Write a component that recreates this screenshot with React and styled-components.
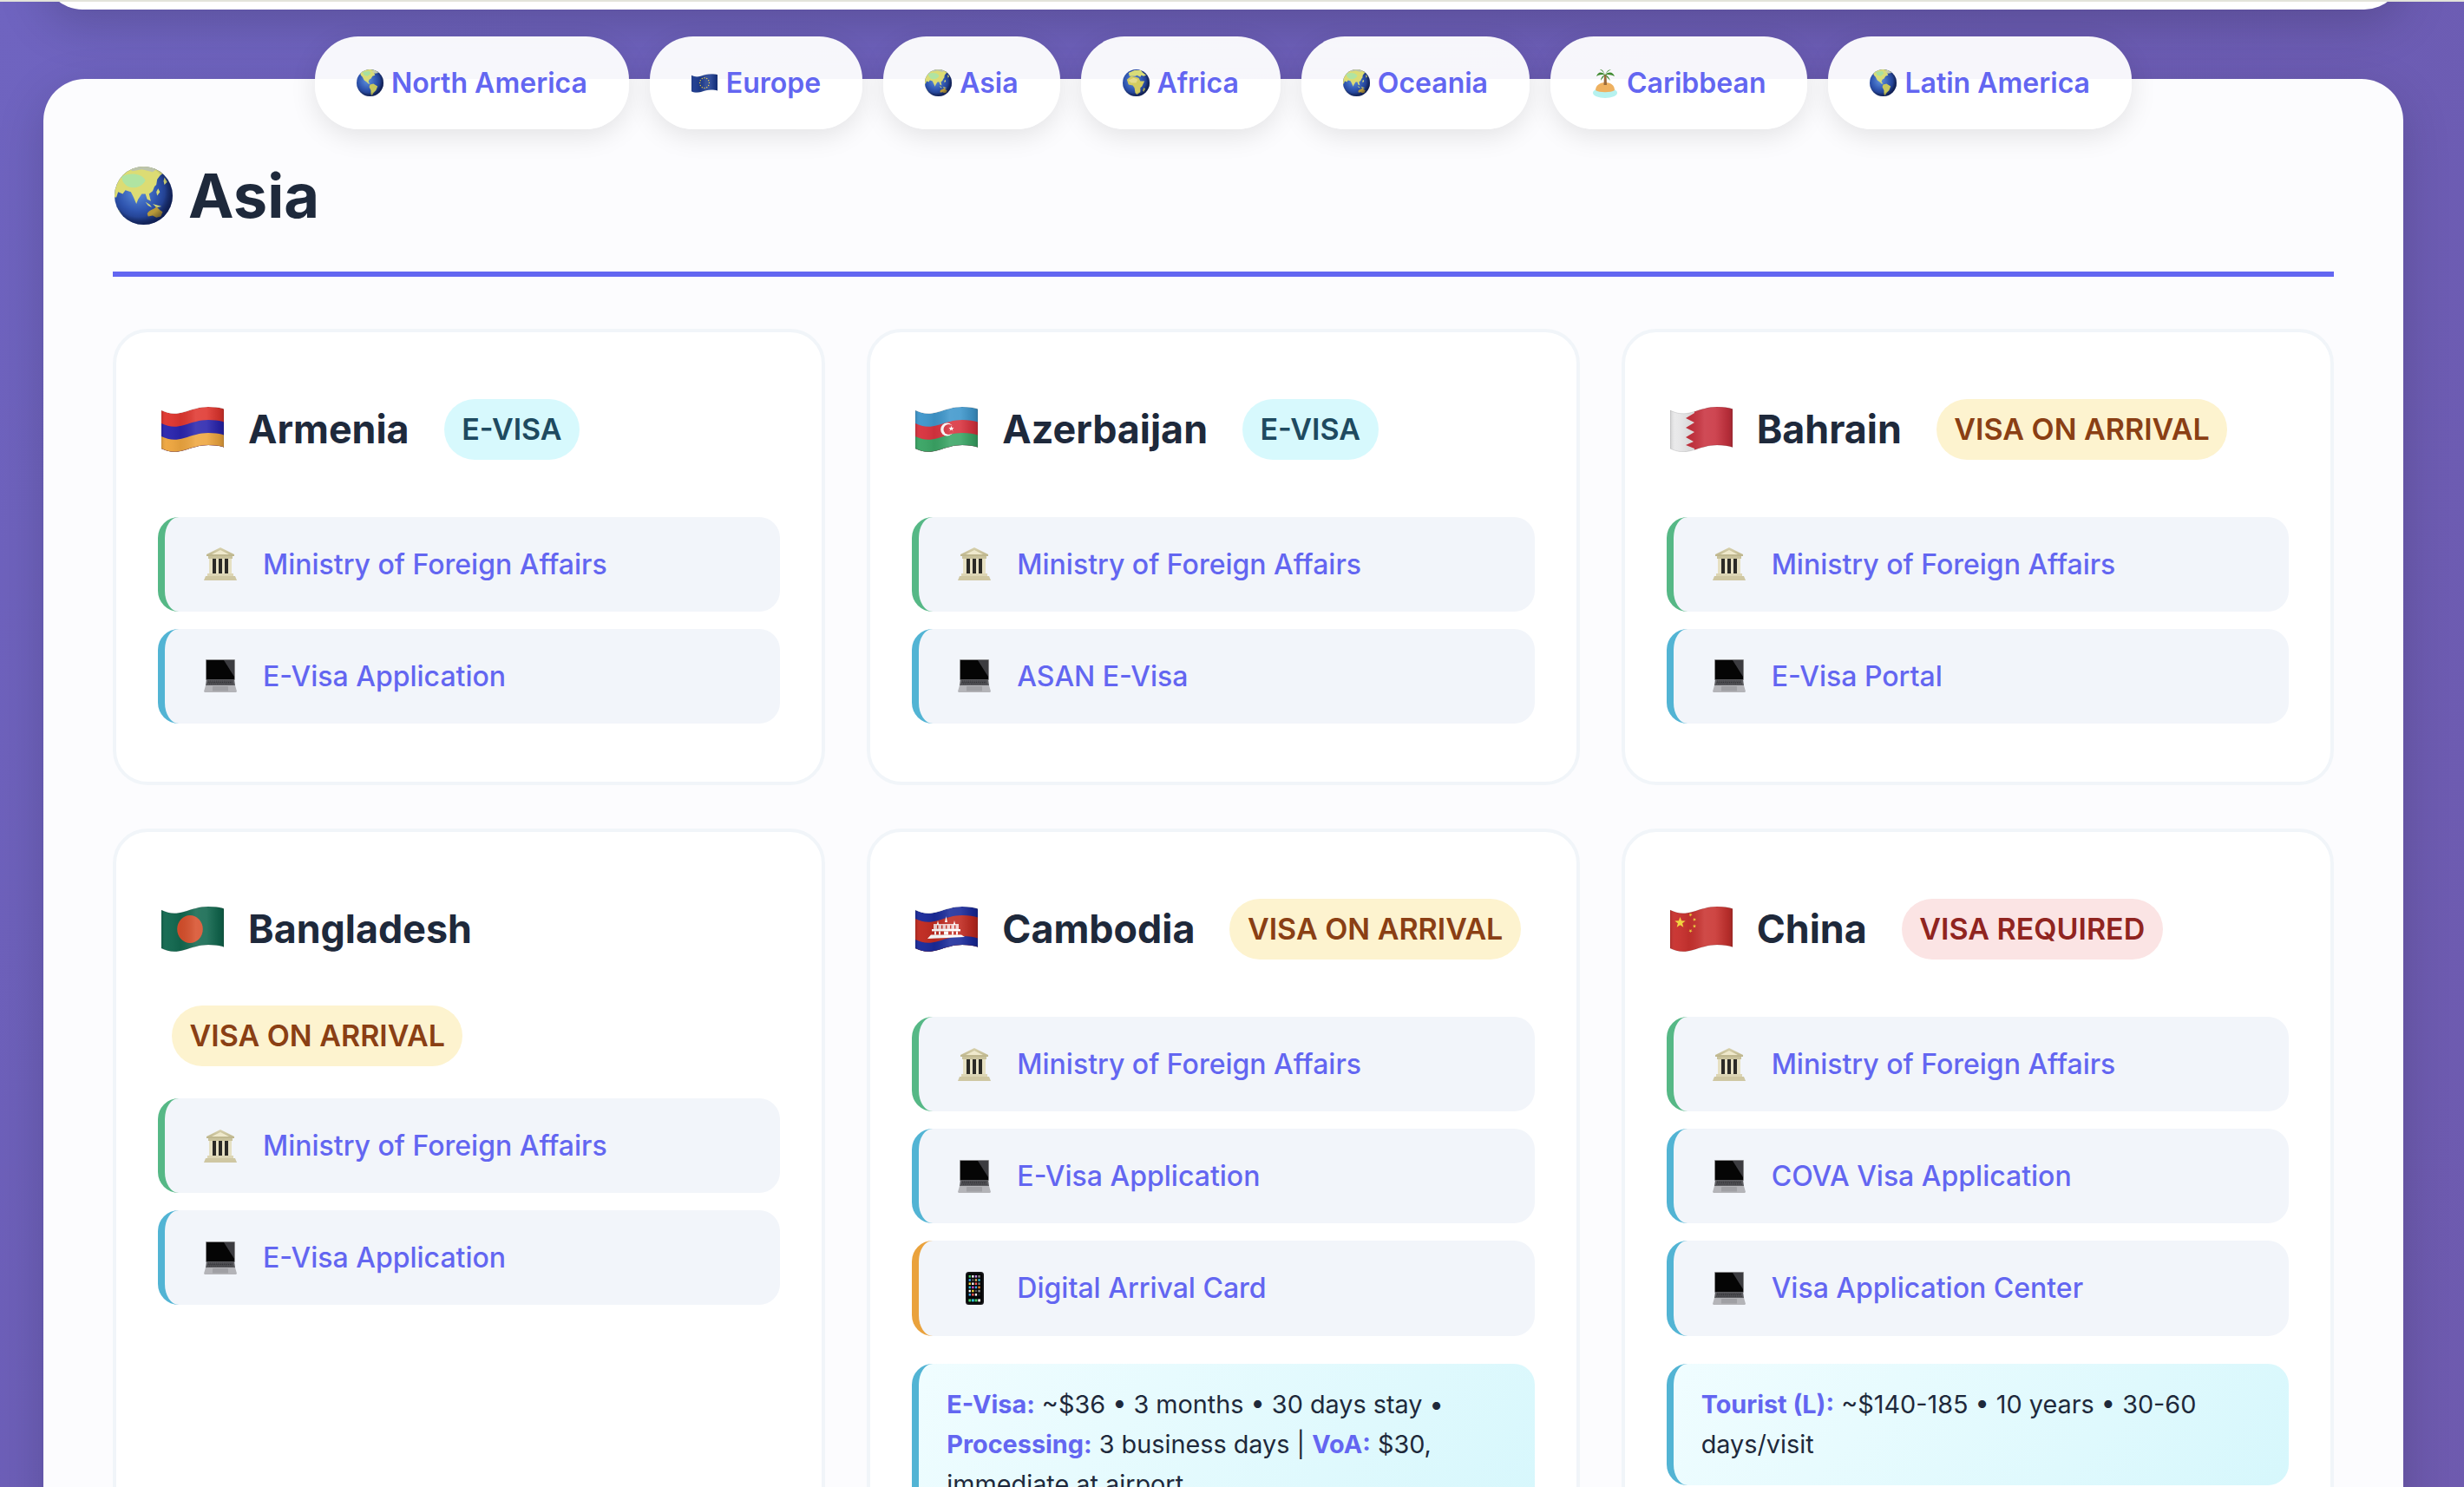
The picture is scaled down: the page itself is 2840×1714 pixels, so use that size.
import React, { useId } from "react";
import styled, { createGlobalStyle } from "styled-components";

const Global = createGlobalStyle`
  html, body { margin: 0; padding: 0; height: 1714px; overflow: hidden; }
  body { font-family: Inter, "Noto Sans", sans-serif; line-height: 1.6; color: #1e293b; }
  #root { height: 1714px; overflow: hidden; }
  * { box-sizing: border-box; }
`;

const Page = styled.div`
  min-height: 1714px;
  padding: 0 70px 0 50px;
  background: linear-gradient(135deg, #6f64c0 0%, #6c5db5 50%, #6e5aae 100%);
`;
const TopStrip = styled.div`
  position: relative;
  z-index: 3;
  height: 2px;
  margin: 0 -70px 0 -50px;
  background: #e3e4da;
`;
const TopCard = styled.div`
  height: 90px;
  margin-top: -81px;
  background: #fff;
  border-radius: 48px;
  box-shadow: 0 16px 56px rgba(0, 0, 0, 0.18);
`;
const RegionNav = styled.nav`
  position: relative;
  z-index: 2;
  display: flex;
  justify-content: center;
  gap: 24px;
  margin-top: 31px;
  margin-bottom: -58px;
`;
const RegionPill = styled.a`
  display: flex;
  align-items: center;
  height: 107px;
  padding: 0 48px;
  border-radius: 50px;
  background: rgba(255, 255, 255, 0.95);
  box-shadow: 0 8px 30px rgba(0, 0, 0, 0.1);
  color: #6366f1;
  font-size: 32px;
  font-weight: 600;
  white-space: nowrap;
`;
const PillEmoji = styled.span`
  display: flex;
  align-items: center;
  width: 40px;
  height: 34px;
`;
const MainCard = styled.main`
  min-height: 1800px;
  padding: 77px 80px 80px;
  background: #fcfcfe;
  border-radius: 48px;
  box-shadow: 0 16px 56px rgba(0, 0, 0, 0.16);
`;
const Heading = styled.h2`
  display: flex;
  align-items: center;
  margin: 0 0 60px;
  padding-bottom: 30px;
  border-bottom: 6px solid #6366f1;
  color: #1e293b;
  font-size: 70.4px;
  font-weight: 700;
  line-height: 115px;
`;
const HeadingEmoji = styled.span`
  display: flex;
  align-items: center;
  width: 87px;
  padding-left: 2px;
`;
const CardGrid = styled.section`
  display: grid;
  grid-template-columns: repeat(3, 1fr);
  gap: 50px 48px;
`;
const CountryCard = styled.article`
  padding: 48px;
  background: #fff;
  border: 4px solid #f1f5f9;
  border-radius: 40px;
`;
const CardHead = styled.header`
  display: flex;
  flex-wrap: wrap;
  align-items: center;
  gap: 24px;
  margin-bottom: 36.6px;
`;
const FlagBox = styled.span`
  display: flex;
  align-items: center;
  justify-content: center;
  width: 80px;
  height: 128px;
`;
const CountryName = styled.h3`
  margin: 0;
  color: #1e293b;
  font-size: 44.8px;
  font-weight: 700;
  line-height: 72px;
`;
const BADGES = {
  evisa: ["#d7f9fd", "#1e4a60"],
  arrival: ["#fdf3cf", "#8a3f14"],
  required: ["#fbe4e4", "#902420"],
};
const StatusBadge = styled.span`
  display: inline-flex;
  align-items: center;
  height: 70px;
  margin-left: 16px;
  padding: 0 20.5px;
  border-radius: 35px;
  font-size: 34px;
  font-weight: 600;
  white-space: nowrap;
  background: ${(p) => BADGES[p.$kind][0]};
  color: ${(p) => BADGES[p.$kind][1]};
`;
const LinkList = styled.div`
  display: flex;
  flex-direction: column;
  gap: 20px;
  margin-bottom: 19.4px;
`;
const TONES = { green: "#56b886", blue: "#52b4d4", orange: "#eaa23c" };
const LinkRow = styled.a`
  display: flex;
  align-items: center;
  height: 109.2px;
  padding-left: 36px;
  border-left: 8px solid ${(p) => TONES[p.$tone]};
  border-radius: 24px;
  background: #f2f5fa;
`;
const LinkIcon = styled.span`
  display: flex;
  align-items: center;
  justify-content: center;
  width: 56px;
  margin-right: 21px;
`;
const LinkLabel = styled.span`
  color: #6366f1;
  font-size: 32px;
  font-weight: 500;
`;
const Note = styled.div`
  margin-top: 32px;
  padding: 24px 32px;
  border-left: 8px solid #52b4d4;
  border-radius: 24px;
  background: linear-gradient(135deg, #f0fdff 0%, #d6f7fc 100%);
  color: #1e293b;
  font-size: 28.8px;
  line-height: 46.08px;
`;
const NoteLabel = styled.strong`
  color: #6366f1;
  font-weight: 700;
`;

/* ---------- emoji drawings ---------- */
const wave = (t) =>
  `C8 ${8 + t} 16 ${9 + t} 26 ${6 + t}C36 ${3 + t} 44 ${t} 54 ${t}C62 ${t} 68 ${1 + t} 72 ${2.5 + t}`;
const waveBack = (t) =>
  `C68 ${1 + t} 62 ${t} 54 ${t}C44 ${t} 36 ${3 + t} 26 ${6 + t}C16 ${9 + t} 8 ${8 + t} 0 ${4 + t}`;
const Band = ({ t, fill }) => <path d={`M0 ${4 + t}${wave(t)}L72 70L0 70Z`} fill={fill} />;
const FLAG_SHAPE = `M0 4${wave(0)}L72 46.5${waveBack(44)}Z`;

const WavyFlag = ({ children, w = 72, h = 52 }) => {
  const id = useId().replace(/[^a-z0-9]/gi, "");
  return (
    <svg width={w} height={h} viewBox="0 0 72 52" aria-hidden="true">
      <defs>
        <clipPath id={`c${id}`}>
          <path d={FLAG_SHAPE} />
        </clipPath>
        <linearGradient id={`s${id}`} x1="0" x2="1" y1="0" y2="0">
          <stop offset="0" stopColor="#000" stopOpacity=".12" />
          <stop offset=".08" stopColor="#fff" stopOpacity=".03" />
          <stop offset=".3" stopColor="#000" stopOpacity=".06" />
          <stop offset=".55" stopColor="#fff" stopOpacity=".12" />
          <stop offset=".72" stopColor="#fff" stopOpacity=".1" />
          <stop offset=".92" stopColor="#000" stopOpacity=".1" />
          <stop offset="1" stopColor="#000" stopOpacity=".2" />
        </linearGradient>
      </defs>
      <g clipPath={`url(#c${id})`}>
        {children}
        <rect x="0" y="-2" width="72" height="56" fill={`url(#s${id})`} />
      </g>
      <path d={FLAG_SHAPE} fill="none" stroke="#000" strokeOpacity=".14" strokeWidth=".8" />
    </svg>
  );
};

const star = (cx, cy, r, rot = 0) => {
  const pts = [];
  for (let i = 0; i < 10; i++) {
    const a = (Math.PI / 5) * i - Math.PI / 2 + rot;
    const q = i % 2 ? r * 0.42 : r;
    pts.push(`${(cx + q * Math.cos(a)).toFixed(2)},${(cy + q * Math.sin(a)).toFixed(2)}`);
  }
  return pts.join(" ");
};

const FlagArmenia = () => (
  <WavyFlag>
    <Band t={0} fill="#e0362f" />
    <Band t={15} fill="#2a25ae" />
    <Band t={30} fill="#eea63f" />
  </WavyFlag>
);
const FlagAzerbaijan = () => (
  <WavyFlag>
    <Band t={0} fill="#3f97cc" />
    <Band t={15} fill="#d9333f" />
    <Band t={30} fill="#3aa565" />
    <circle cx="36.5" cy="26" r="7.4" fill="#fff" />
    <circle cx="38.5" cy="26" r="6" fill="#d9333f" />
    <polygon points={star(41.5, 25, 3.2)} fill="#fff" />
  </WavyFlag>
);
const FlagBahrain = () => (
  <WavyFlag>
    <rect x="0" y="-2" width="72" height="56" fill="#e9e9ea" />
    <polygon
      points="27,-4 28,7 18,13 28,18 18,24 28,29 18,35 27,40 18,44 28,48 28,56 74,56 74,-4"
      fill="#c9323f"
    />
  </WavyFlag>
);
const FlagBangladesh = () => (
  <WavyFlag>
    <rect x="0" y="-2" width="72" height="56" fill="#12684f" />
    <ellipse cx="33" cy="26" rx="14.8" ry="16" fill="#d8502c" />
  </WavyFlag>
);
const FlagCambodia = () => (
  <WavyFlag>
    <Band t={0} fill="#1a2a9a" />
    <Band t={10} fill="#c02a20" />
    <Band t={34} fill="#1a2a9a" />
    <g fill="#fff">
      <polygon points="35.5,11 37,18 34,18" />
      <polygon points="26,16 27.3,21 24.7,21" />
      <polygon points="45,16 46.3,21 43.7,21" />
      <rect x="21" y="20" width="29" height="6" opacity=".8" />
      <rect x="19" y="26" width="33" height="2.4" />
      <rect x="22" y="28.5" width="2" height="4" />
      <rect x="27" y="28.5" width="2" height="4" />
      <rect x="33" y="28.5" width="5" height="4" />
      <rect x="42" y="28.5" width="2" height="4" />
      <rect x="47" y="28.5" width="2" height="4" />
      <polygon points="18,32.5 53,32.5 57,35 14,37" />
    </g>
    <g fill="#c02a20">
      <rect x="25" y="21.5" width="1.4" height="4" />
      <rect x="30" y="21.5" width="1.4" height="4" />
      <rect x="35" y="21.5" width="1.4" height="4" />
      <rect x="40" y="21.5" width="1.4" height="4" />
      <rect x="45" y="21.5" width="1.4" height="4" />
    </g>
  </WavyFlag>
);
const FlagChina = () => (
  <WavyFlag>
    <rect x="0" y="-2" width="72" height="56" fill="#c9322f" />
    <g fill="#f5d63d">
      <polygon points={star(11.5, 18.5, 6.5)} />
      <polygon points={star(23.5, 9.5, 2.2, 0.4)} />
      <polygon points={star(28, 15, 2.2, 0.9)} />
      <polygon points={star(28, 22.5, 2.2, 0)} />
      <polygon points={star(23.5, 28, 2.2, 0.5)} />
    </g>
  </WavyFlag>
);

const Globe = ({ size, children }) => {
  const id = useId().replace(/[^a-z0-9]/gi, "");
  return (
    <svg width={size} height={size} viewBox="0 0 64 64" aria-hidden="true">
      <defs>
        <radialGradient id={`o${id}`} cx=".4" cy=".42" r=".62">
          <stop offset="0" stopColor="#5f92dd" />
          <stop offset=".55" stopColor="#2f55b0" />
          <stop offset="1" stopColor="#152a6e" />
        </radialGradient>
        <radialGradient id={`v${id}`} cx=".42" cy=".42" r=".62">
          <stop offset=".72" stopColor="#000" stopOpacity="0" />
          <stop offset="1" stopColor="#0a1238" stopOpacity=".55" />
        </radialGradient>
        <clipPath id={`g${id}`}>
          <circle cx="32" cy="32" r="32" />
        </clipPath>
      </defs>
      <circle cx="32" cy="32" r="32" fill={`url(#o${id})`} />
      <g clipPath={`url(#g${id})`}>{children}</g>
      <circle cx="32" cy="32" r="32" fill={`url(#v${id})`} />
    </svg>
  );
};
const GlobeAsia = ({ size }) => (
  <Globe size={size}>
    <path
      d="M0 34L0 20C2 8 16 -2 32 -2C42 -2 50 2 54 7L50 10L47 14L46 20L44 22L42 27L38 30L40 38L36 36L34 30L30 30L26 36L24 41L21 34L18 28L12 26L9 30L4 28L2 34Z"
      fill="#dcdc74"
    />
    <path d="M8 11C18 6 30 8 34 15C31 22 22 25 15 22C11 20 8 16 8 11Z" fill="#b0e4a2" />
    <path d="M14 2C22 -1 36 -2 46 3L42 6L30 3L20 5Z" fill="#bcc4ac" />
    <path d="M34 39L39 42L41 45L37 43ZM42 41L52 44L46 45ZM48 24L50 28L47 32L46 28ZM55 12L58 17L55 20L54 16Z" fill="#d4d878" />
    <path d="M2 50L5 48L8 54L5 56Z" fill="#d4d878" />
    <path d="M36 52C38 47 44 48 46 44L50 48L53 50L51 55L46 56L42 54L37 55Z" fill="#b8993a" />
  </Globe>
);
const GlobeAmericas = ({ size }) => (
  <Globe size={size}>
    <path
      d="M8 6C16 0 30 -2 44 2L46 6L42 10L44 14L38 16L34 22L30 24L28 30L32 34L28 34L24 30L18 26L14 18L10 14Z"
      fill="#d8dc78"
    />
    <path d="M14 6L30 4L34 10L26 16L18 14Z" fill="#a8e0a0" />
    <path d="M32 36L40 34L50 40L46 50L40 56L37 62L34 60L34 50L30 42Z" fill="#c8c85c" />
    <path d="M36 4L48 2L52 8L44 10Z" fill="#c4cbb0" />
  </Globe>
);
const GlobeAfrica = ({ size }) => (
  <Globe size={size}>
    <path
      d="M14 8L28 2L44 2L46 6L56 14L50 16L44 14L42 18L34 14L30 16L22 16L16 16Z"
      fill="#d8dc78"
    />
    <path d="M10 24L20 16L30 18L38 20L42 28L52 28L46 40L42 44L42 54L34 60L30 56L28 44L24 38L14 36Z" fill="#d4cc60" />
    <path d="M14 26L26 20L36 24L32 32L20 32Z" fill="#e6dc8c" />
    <path d="M50 44L54 46L50 54L48 50Z" fill="#c8c85c" />
  </Globe>
);
const EuFlag = () => {
  const dots = [];
  for (let i = 0; i < 12; i++) {
    const a = (Math.PI / 6) * i;
    dots.push(<circle key={i} cx={36 + 13 * Math.cos(a)} cy={25 + 14 * Math.sin(a)} r="1.8" fill="#e9c93c" />);
  }
  return (
    <WavyFlag w={30} h={22}>
      <rect x="0" y="-2" width="72" height="56" fill="#1c3b8f" />
      {dots}
    </WavyFlag>
  );
};
const Island = () => (
  <svg width="30" height="34" viewBox="0 0 30 34" aria-hidden="true">
    <ellipse cx="15" cy="28" rx="14" ry="6" fill="#b6f2ef" />
    <path d="M4 25C4 19 10 16 15 16C21 16 26 19 26 25C22 28 8 28 4 25Z" fill="#eeb160" />
    <path d="M14 7L16.5 7L17 19L13.5 19Z" fill="#9a6a3a" />
    <g fill="#3f8a30">
      <path d="M15 7C10 3 7 4 5 9C8 7 11 7 15 7Z" />
      <path d="M15 7C20 3 24 4 26 9C22 7 19 7 15 7Z" />
      <path d="M15 7C13 3 12 1 9 1C11 2 13 4 15 7Z" />
      <path d="M15 7C17 3 19 1 22 1C20 2 17 4 15 7Z" />
      <path d="M15 7C12 8 10 11 10 14C12 11 13 10 15 7Z" />
      <path d="M15 7C18 8 20 11 21 14C18 11 17 10 15 7Z" />
    </g>
  </svg>
);
const Building = () => (
  <svg width="38" height="38" viewBox="0 0 38 38" aria-hidden="true">
    <defs>
      <linearGradient id="stone" x1="0" x2="0" y1="0" y2="1">
        <stop offset="0" stopColor="#d9d2ae" />
        <stop offset="1" stopColor="#bdb58c" />
      </linearGradient>
    </defs>
    <polygon points="19,0 35,8 35,10 3,10 3,8" fill="url(#stone)" />
    <polygon points="19,3 29,8 9,8" fill="#efe9cc" />
    <rect x="5" y="10" width="28" height="3" fill="#c9c29c" />
    <rect x="6" y="13" width="26" height="17" fill="#e6e0c2" />
    <rect x="10" y="13" width="4" height="17" fill="#2b2a26" />
    <rect x="17" y="13" width="4" height="17" fill="#2b2a26" />
    <rect x="24" y="13" width="4" height="17" fill="#2b2a26" />
    <rect x="4" y="30" width="30" height="3" fill="#dcd5b4" />
    <polygon points="2,33 36,33 38,38 0,38" fill="#cfc7a2" />
  </svg>
);
const Laptop = () => (
  <svg width="38" height="38" viewBox="0 0 38 38" aria-hidden="true">
    <rect x="2" y="0" width="34" height="24" rx="1" fill="#8a8a8c" />
    <rect x="3" y="1" width="32" height="22" fill="#050505" />
    <polygon points="23,1 35,1 35,20" fill="#3c3c40" />
    <polygon points="3,23 35,23 36,30 2,30" fill="#5c5c60" />
    <g stroke="#26262a" strokeWidth=".9">
      <path d="M5 25H33M4.6 26.6H33.4M4.2 28.2H33.8" strokeDasharray="1.2 .6" />
    </g>
    <polygon points="2,30 36,30 38,37 37,38 1,38 0,37" fill="#b4b4b8" />
    <rect x="10" y="31" width="18" height="5.4" rx=".5" fill="#a0a0a4" />
  </svg>
);
const Phone = () => {
  const cols = ["#49d16a", "#fff", "#c68be8", "#8d8d8d", "#3fa9f5", "#555", "#e0b060", "#36c3e0", "#f5d63d", "#fff", "#ff5a5a", "#888", "#36c3e0", "#d04fd0", "#3fa9f5", "#f08a30", "#fff", "#f5d63d", "#555", "#999", "#3fa9f5", "#ff5a5a", "#fff", "#222"];
  const cells = cols.map((c, i) => (
    <rect key={i} x={3.6 + (i % 4) * 3.6} y={4 + Math.floor(i / 4) * 4.2} width="2.3" height="2.6" fill={c} />
  ));
  return (
    <svg width="21" height="38" viewBox="0 0 21 38" aria-hidden="true">
      <rect x="0" y="0" width="21" height="38" rx="3.5" fill="#1a1a1c" />
      <rect x="1.5" y="1.5" width="18" height="35" rx="2.5" fill="#050506" />
      {cells}
      {["#49d16a", "#36c3e0", "#49d16a", "#eee"].map((c, i) => (
        <rect key={i} x={3.4 + i * 3.6} y="31.4" width="2.8" height="3" fill={c} />
      ))}
    </svg>
  );
};

/* ---------- data ---------- */
const REGIONS = [
  ["North America", <GlobeAmericas size={31} />],
  ["Europe", <EuFlag />],
  ["Asia", <GlobeAsia size={31} />],
  ["Africa", <GlobeAfrica size={31} />],
  ["Oceania", <GlobeAsia size={31} />],
  ["Caribbean", <Island />],
  ["Latin America", <GlobeAmericas size={31} />],
];
const MFA = ["green", "building", "Ministry of Foreign Affairs"];
const web = (t) => ["blue", "laptop", t];
const ICONS = { building: <Building />, laptop: <Laptop />, phone: <Phone /> };
const COUNTRIES = [
  { name: "Armenia", flag: <FlagArmenia />, kind: "evisa", status: "E-VISA", links: [MFA, web("E-Visa Application")] },
  { name: "Azerbaijan", flag: <FlagAzerbaijan />, kind: "evisa", status: "E-VISA", links: [MFA, web("ASAN E-Visa")] },
  { name: "Bahrain", flag: <FlagBahrain />, kind: "arrival", status: "VISA ON ARRIVAL", links: [MFA, web("E-Visa Portal")] },
  { name: "Bangladesh", flag: <FlagBangladesh />, kind: "arrival", status: "VISA ON ARRIVAL", links: [MFA, web("E-Visa Application")] },
  {
    name: "Cambodia",
    flag: <FlagCambodia />,
    kind: "arrival",
    status: "VISA ON ARRIVAL",
    links: [MFA, web("E-Visa Application"), ["orange", "phone", "Digital Arrival Card"]],
    note: (
      <>
        <NoteLabel>E-Visa:</NoteLabel> ~$36 • 3 months • 30 days stay • <NoteLabel>Processing:</NoteLabel> 3 business days | <NoteLabel>VoA:</NoteLabel> $30, immediate at airport
      </>
    ),
  },
  {
    name: "China",
    flag: <FlagChina />,
    kind: "required",
    status: "VISA REQUIRED",
    links: [MFA, web("COVA Visa Application"), web("Visa Application Center")],
    note: (
      <>
        <NoteLabel>Tourist (L):</NoteLabel> ~$140-185 • 10 years • 30-60 days/visit
      </>
    ),
  },
];

export default function App() {
  return (
    <>
      <Global />
      <Page>
        <TopStrip />
        <TopCard />
        <RegionNav>
          {REGIONS.map(([label, icon]) => (
            <RegionPill key={label}>
              <PillEmoji>{icon}</PillEmoji>
              {label}
            </RegionPill>
          ))}
        </RegionNav>
        <MainCard>
          <Heading>
            <HeadingEmoji>
              <GlobeAsia size={67} />
            </HeadingEmoji>
            Asia
          </Heading>
          <CardGrid>
            {COUNTRIES.map((c) => (
              <CountryCard key={c.name}>
                <CardHead>
                  <FlagBox>{c.flag}</FlagBox>
                  <CountryName>{c.name}</CountryName>
                  <StatusBadge $kind={c.kind}>{c.status}</StatusBadge>
                </CardHead>
                <LinkList>
                  {c.links.map(([tone, icon, label]) => (
                    <LinkRow key={label} $tone={tone}>
                      <LinkIcon>{ICONS[icon]}</LinkIcon>
                      <LinkLabel>{label}</LinkLabel>
                    </LinkRow>
                  ))}
                </LinkList>
                {c.note && <Note>{c.note}</Note>}
              </CountryCard>
            ))}
          </CardGrid>
        </MainCard>
      </Page>
    </>
  );
}
